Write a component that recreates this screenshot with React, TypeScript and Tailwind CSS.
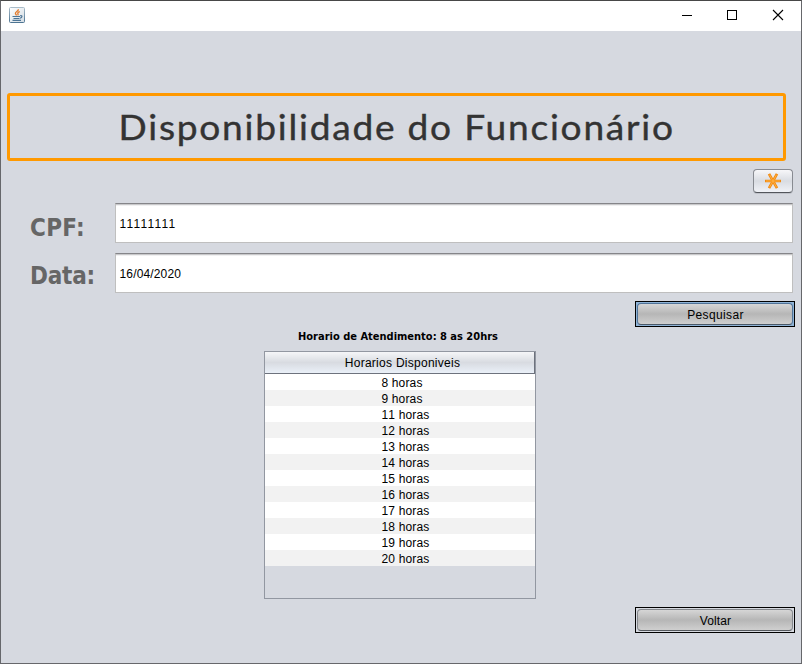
import React from "react";

const hours = [8, 9, 11, 12, 13, 14, 15, 16, 17, 18, 19, 20];

function JavaIcon() {
  return (
    <svg width="16" height="16" viewBox="0 0 16 16">
      <defs>
        <linearGradient id="frame" x1="0" y1="0" x2="0" y2="1">
          <stop offset="0" stopColor="#a9bcc9" />
          <stop offset="1" stopColor="#4d7492" />
        </linearGradient>
        <linearGradient id="face" x1="0" y1="0" x2="1" y2="1">
          <stop offset="0" stopColor="#ffffff" />
          <stop offset="1" stopColor="#d3dce3" />
        </linearGradient>
      </defs>
      <rect x="0.5" y="0.5" width="15" height="15" rx="1" fill="url(#face)" stroke="url(#frame)" />
      <path d="M9.4 2.3C9.6 4.3 5.9 4.8 6.4 6.6C6.7 7.4 7.4 7.8 7.5 8.5M10.8 4.6C8.8 5.2 8.4 6 9 6.8C9.3 7.4 9 7.9 8.6 8.3" fill="none" stroke="#e47b2c" strokeWidth="1.3" />
      <path d="M3.5 9.5H11M4.5 11.5H10.5M11.2 8.7C13.8 8.3 13.2 10.8 11 11.2M3.5 13.4H12" fill="none" stroke="#4d7596" strokeWidth="1.2" />
    </svg>
  );
}

function TitleBar() {
  return (
    <header className="flex h-[30px] shrink-0 bg-white">
      <div className="pl-2 pt-1.5"><JavaIcon /></div>
      <svg className="ml-auto" width="138" height="30" viewBox="0 0 138 30" fill="none" stroke="#000" shapeRendering="crispEdges">
        <path d="M19 14.5H29" />
        <rect x="64.5" y="9.5" width="9" height="9" />
        <path d="M110 9L120 19M120 9L110 19" shapeRendering="auto" strokeWidth="1.1" />
      </svg>
    </header>
  );
}

function Field({ label, value, labelClass, valueClass }: { label: string; value: string; labelClass: string; valueClass: string }) {
  return (
    <div className="flex h-10">
      <label className={`w-[85px] shrink-0 whitespace-nowrap font-['DejaVu_Sans',sans-serif] text-2xl font-bold leading-10 text-[#666] font-stretch-condensed ${labelClass}`}>
        {label}
      </label>
      <div className={`flex flex-1 items-center border border-[#bfbfbf] border-t-[#858589] bg-white pl-[3.5px] pt-[2px] text-[12px] shadow-[inset_0_1px_0_#c9c9cb,inset_0_2px_0_#f0f0f1] ${valueClass}`}>
        {value}
      </div>
    </div>
  );
}

function ActionButton({ label, focused }: { label: string; focused?: boolean }) {
  return (
    <div className={`h-[26px] w-40 border border-black p-px ${focused ? "bg-[#8fb3d6]" : "bg-[#d6d9e0]"}`}>
      <button
        className={`block h-[22px] w-[156px] rounded-[4px] border bg-linear-to-b from-[#d6d6d6] via-[#b6b6b6] to-[#cfcfcf] text-center text-[12px] leading-[22px] ${focused ? "border-[#507398] border-b-[#4b5968] pl-px tracking-[0.35px]" : "border-[#85888d] border-b-[#55595e] pl-px tracking-[0.1px]"}`}
      >
        {label}
      </button>
    </div>
  );
}

export default function App() {
  return (
    <div className="flex h-[664px] w-[802px] flex-col border border-[#66676b] border-t-[#484848] bg-[#d6d9e0] font-['Liberation_Sans',Arial,sans-serif] text-[12px] text-black">
      <TitleBar />
      <main className="flex flex-col pl-1.5 pr-2 pt-[62px]">
        <h1 className="flex h-[68px] w-[779px] items-center justify-center rounded-[3px] border-3 border-[#ff9900] font-[Lato,sans-serif] text-[34.5px] font-normal leading-none tracking-[1.65px] text-[#333] [-webkit-text-stroke:0.4px_#333]">
          <span className="scale-x-[1.075] whitespace-nowrap">Disponibilidade do Funcionário</span>
        </h1>
        <button className="mt-2 flex h-6 w-10 items-center justify-center self-end rounded-[4px] border border-[#888b91] border-b-[#53565c] bg-linear-to-b from-[#f7f7f9] via-[#d9dce2] to-[#f0f2f7] shadow-[0_1px_0_#bfc2c9]">
          <svg width="16" height="16" viewBox="0 0 16 16" strokeLinecap="butt">
            <path d="M0 8H16M4 0.8L12 15.2M12 0.8L4 15.2" stroke="#f28a12" strokeWidth="2.7" />
            <path d="M1 8H15M4.5 1.7L11.5 14.3M11.5 1.7L4.5 14.3" stroke="#ffb040" strokeWidth="1" />
          </svg>
        </button>
        <section className="mt-2.5 flex flex-col gap-2.5 pl-[23px]">
          <Field label="CPF:" value="11111111" labelClass="pt-[5px] tracking-[0.3px]" valueClass="tracking-[0.33px] [font-kerning:none]" />
          <Field label="Data:" value="16/04/2020" labelClass="pt-[3px] tracking-[-0.2px]" valueClass="tracking-[0.15px]" />
        </section>
        <div className="-mr-0.5 mt-2 self-end"><ActionButton label="Pesquisar" focused /></div>
        <p className="ml-[291px] mt-0.5 h-[22px] whitespace-nowrap font-['DejaVu_Sans',sans-serif] text-[11px] font-bold leading-4 font-stretch-condensed">
          Horario de Atendimento: 8 as 20hrs
        </p>
        <table className="ml-[257px] block h-[248px] w-[272px] border border-[#9297a1] text-center">
          <thead className="block">
            <tr className="block h-[22px] border-b border-r border-[#6d727d] bg-linear-to-b from-[#f5f6f8] via-[#d8dbe1] to-[#eaf0f8]">
              <th className="block pl-[6px] font-normal leading-[22px] tracking-[0.27px]">Horarios Disponiveis</th>
            </tr>
          </thead>
          <tbody className="block">
            {hours.map((hour) => (
              <tr key={hour} className="block h-4 bg-white even:bg-[#f2f2f2]">
                <td className={`block leading-[18px] tracking-[0.17px] [font-kerning:none] ${hour < 10 ? "pl-[4px]" : "pl-[11px]"}`}>{hour} horas</td>
              </tr>
            ))}
          </tbody>
        </table>
        <div className="-mr-0.5 mt-2 self-end"><ActionButton label="Voltar" /></div>
      </main>
    </div>
  );
}
